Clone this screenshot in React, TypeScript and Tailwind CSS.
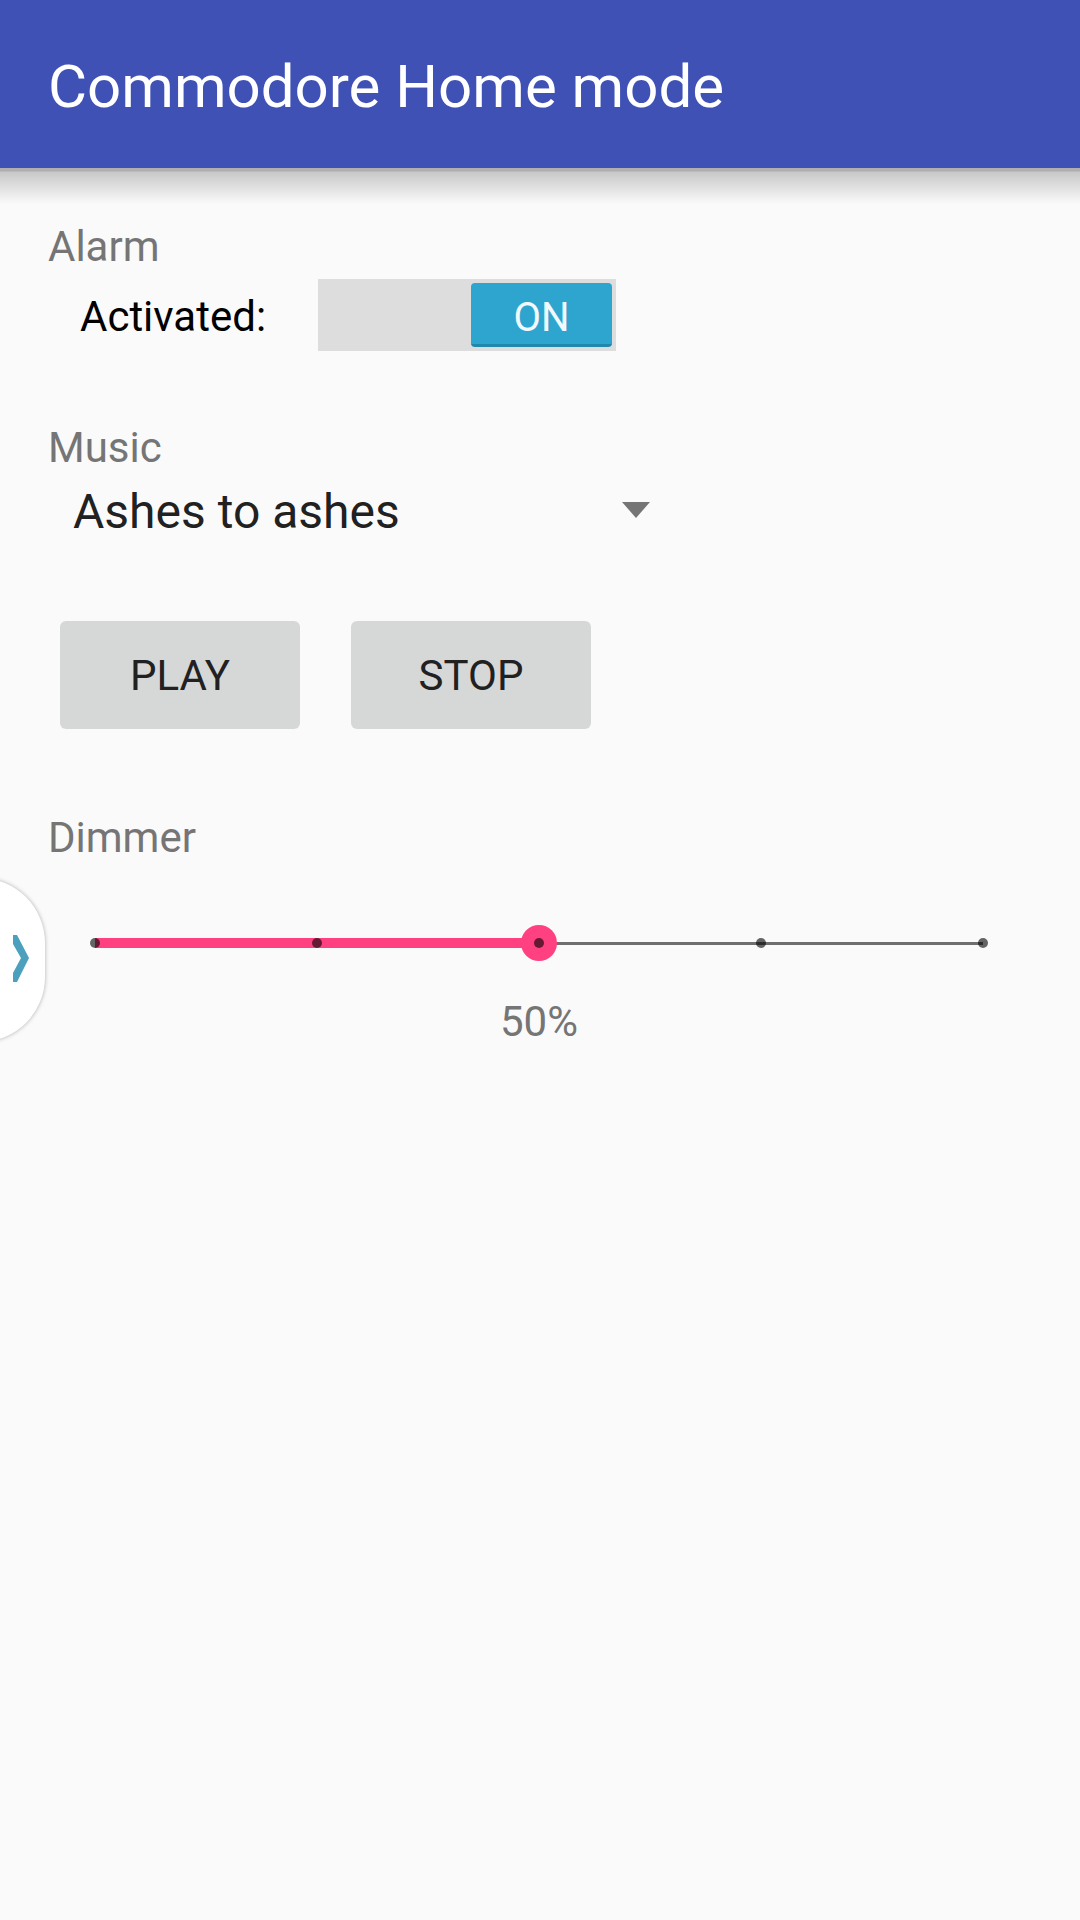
const TICKS = [0, 25, 50, 75, 100];

function Toggle() {
  return (
    <div className="w-[298px] h-[72px] bg-[#dddddd] flex justify-end items-center pr-[4px]">
      <div className="w-[141px] h-[64px] pt-[9px] rounded-[4px] bg-[#2da5cf] border-b-[3px] border-[#2188ad] flex items-center justify-center text-[40px] text-[#f2f9fc] leading-none">
        ON
      </div>
    </div>
  );
}

function Slider({ value }: { value: number }) {
  return (
    <div className="relative ml-[95px] w-[888px] h-[40px]">
      <div className="absolute left-0 right-0 top-[19px] h-[3px] bg-[#6f6f6f]" />
      <div className="absolute left-0 top-[15px] h-[10px] bg-[#ff4081]" style={{ width: `${value}%` }} />
      <div
        className="absolute top-[2px] w-[36px] h-[36px] -ml-[18px] rounded-full bg-[#ff4081]"
        style={{ left: `${value}%` }}
      />
      {TICKS.map((t) => (
        <div
          key={t}
          className="absolute top-[15px] w-[10px] h-[10px] -ml-[5px] rounded-full bg-black/60"
          style={{ left: `${t}%` }}
        />
      ))}
    </div>
  );
}

export default function App() {
  return (
    <div className="relative w-full h-[1920px] overflow-hidden bg-[#fafafa] font-['Roboto',sans-serif]">
      <header className="h-[168px] bg-[#3f51b5] pl-[48px] pt-[52px]">
        <h1 className="text-[60px] leading-[70px] text-white">Commodore Home mode</h1>
      </header>
      <div className="absolute left-0 right-0 top-[168px] h-[36px] bg-[linear-gradient(to_bottom,rgba(0,0,0,0.3)_0px,rgba(0,0,0,0.3)_3px,rgba(0,0,0,0.2)_4px,rgba(0,0,0,0)_36px)]" />

      <main className="pt-[54px]">
        <section className="pl-[48px]">
          <h2 className="text-[42px] leading-[50px] text-[#757575]">Alarm</h2>
          <div className="mt-[7px] flex items-center pl-[32px]">
            <span className="w-[238px] h-[72px] pt-[3px] text-[42px] leading-[69px] text-black">Activated:</span>
            <Toggle />
          </div>
        </section>

        <section className="mt-[72px] pl-[48px]">
          <h2 className="text-[42px] leading-[50px] text-[#757575]">Music</h2>
          <div className="mt-[9px] w-[602px] flex items-center justify-between pl-[25px]">
            <span className="text-[48px] leading-[60px] text-[#212121]">Ashes to ashes</span>
            <svg width="28" height="16" viewBox="0 0 28 16" className="mt-[-4px]">
              <polygon points="0,0 28,0 14,16" fill="#757575" />
            </svg>
          </div>
          <div className="mt-[79px] ml-[12px] flex gap-[51px]">
            <button className="w-[240px] h-[108px] rounded-[6px] bg-[#d6d7d7] text-[42px] text-[#212121]">PLAY</button>
            <button className="w-[240px] h-[108px] rounded-[6px] bg-[#d6d7d7] text-[42px] text-[#212121]">STOP</button>
          </div>
        </section>

        <section className="mt-[84px]">
          <h2 className="pl-[48px] text-[42px] leading-[50px] text-[#757575]">Dimmer</h2>
          <div className="mt-[60px]">
            <Slider value={50} />
          </div>
          <div className="mt-[34px] ml-[95px] w-[888px] text-center text-[42px] leading-[50px] text-[#757575]">50%</div>
        </section>
      </main>

      <div className="absolute left-[-85px] top-[878px] w-[130px] h-[164px] rounded-full bg-white shadow-[0_0_4px_rgba(0,0,0,0.3)]">
        <svg width="17" height="47" viewBox="0 0 17 47" className="absolute left-[98px] top-[57px]">
          <polygon points="0,0 4,0 16,23 4,47 0,47 0,38 8,23 0,9" fill="#4aa0bd" />
        </svg>
      </div>
    </div>
  );
}
